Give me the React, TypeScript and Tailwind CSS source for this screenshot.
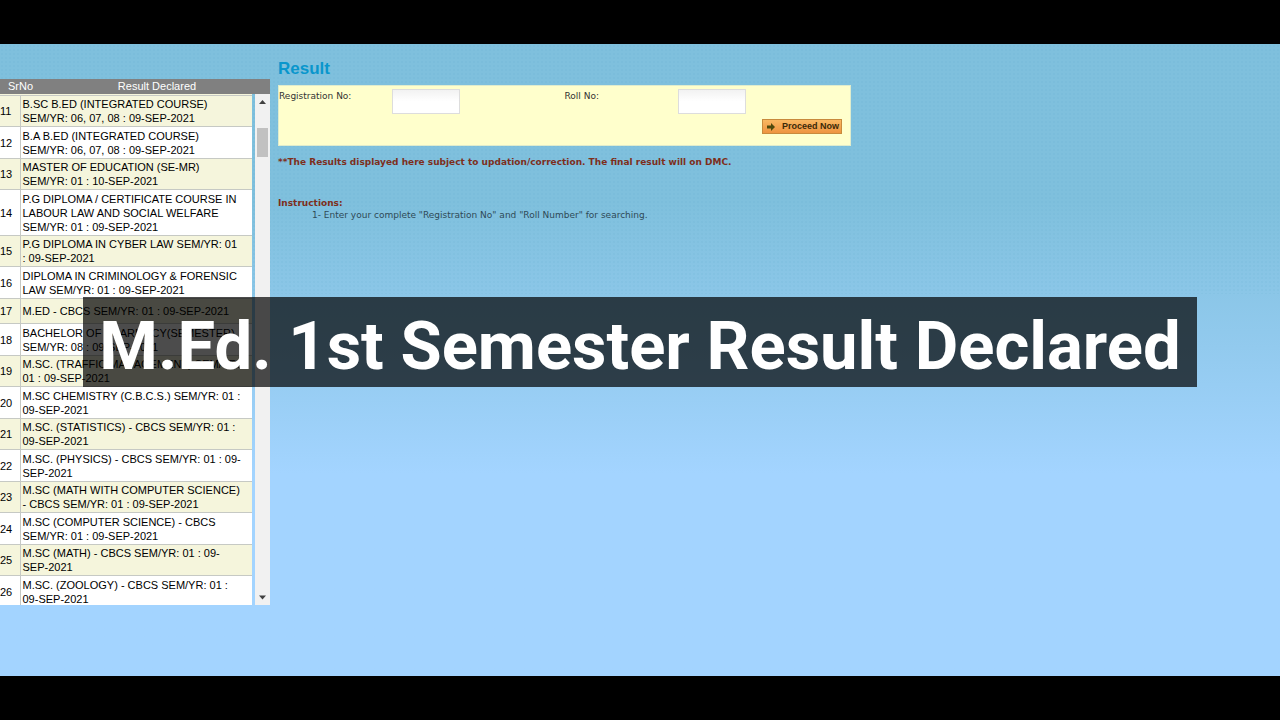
import React from 'react';

type ResultRow = {
  no: number;
  lines: string[];
};

const results: ResultRow[] = [
  { no: 11, lines: ['B.SC B.ED (INTEGRATED COURSE)', 'SEM/YR: 06, 07, 08 : 09-SEP-2021'] },
  { no: 12, lines: ['B.A B.ED (INTEGRATED COURSE)', 'SEM/YR: 06, 07, 08 : 09-SEP-2021'] },
  { no: 13, lines: ['MASTER OF EDUCATION (SE-MR)', 'SEM/YR: 01 : 10-SEP-2021'] },
  { no: 14, lines: ['P.G DIPLOMA / CERTIFICATE COURSE IN', 'LABOUR LAW AND SOCIAL WELFARE', 'SEM/YR: 01 : 09-SEP-2021'] },
  { no: 15, lines: ['P.G DIPLOMA IN CYBER LAW SEM/YR: 01', ': 09-SEP-2021'] },
  { no: 16, lines: ['DIPLOMA IN CRIMINOLOGY & FORENSIC', 'LAW SEM/YR: 01 : 09-SEP-2021'] },
  { no: 17, lines: ['M.ED - CBCS SEM/YR: 01 : 09-SEP-2021'] },
  { no: 18, lines: ['BACHELOR OF PHARMACY(SEMESTER)', 'SEM/YR: 08 : 09-SEP-2021'] },
  { no: 19, lines: ['M.SC. (TRAFFIC MANAGEMENT) SEM/YR:', '01 : 09-SEP-2021'] },
  { no: 20, lines: ['M.SC CHEMISTRY (C.B.C.S.) SEM/YR: 01 :', '09-SEP-2021'] },
  { no: 21, lines: ['M.SC. (STATISTICS) - CBCS SEM/YR: 01 :', '09-SEP-2021'] },
  { no: 22, lines: ['M.SC. (PHYSICS) - CBCS SEM/YR: 01 : 09-', 'SEP-2021'] },
  { no: 23, lines: ['M.SC (MATH WITH COMPUTER SCIENCE)', '- CBCS SEM/YR: 01 : 09-SEP-2021'] },
  { no: 24, lines: ['M.SC (COMPUTER SCIENCE) - CBCS', 'SEM/YR: 01 : 09-SEP-2021'] },
  { no: 25, lines: ['M.SC (MATH) - CBCS SEM/YR: 01 : 09-', 'SEP-2021'] },
  { no: 26, lines: ['M.SC. (ZOOLOGY) - CBCS SEM/YR: 01 :', '09-SEP-2021'] },
];

function rowHeight(lines: number) {
  if (lines === 1) return 'h-[25px]';
  if (lines === 3) return 'h-[46px]';
  return 'h-[31px] even:h-[32px]';
}

function ScrollBar() {
  return (
    <div className="flex w-[15px] flex-col items-center justify-between bg-[#f1f1f1]" aria-hidden="true">
      <div className="flex flex-col items-center">
        <svg className="h-[34px] w-[15px]" viewBox="0 0 15 34">
          <path d="M4 10 7.5 6 11 10z" fill="#404040" />
        </svg>
        <div className="h-[29px] w-[11px] bg-[#c1c1c1]" />
      </div>
      <svg className="h-[15px] w-[15px]" viewBox="0 0 15 15">
        <path d="M4 5.5 7.5 9.5 11 5.5z" fill="#404040" />
      </svg>
    </div>
  );
}

function ResultList() {
  return (
    <aside className="w-[270px] shrink-0 pt-[35px] text-[11px] leading-[14px]">
      <div className="flex h-[15px] bg-[#808080] text-white">
        <span className="w-[44px] pl-2">SrNo</span>
        <span className="flex-1 text-center">Result Declared</span>
      </div>
      <div className="flex h-[511px] justify-between overflow-hidden">
        <div className="w-[252px] border-t border-[#f5f5dc] bg-white">
          <table className="w-full table-fixed border-collapse border-t border-[#c6c9c4] text-black">
            <tbody>
              {results.map((row) => (
                <tr key={row.no} className={`border-b border-[#c6c9c4] odd:bg-[#f5f5dc] even:bg-white ${rowHeight(row.lines.length)}`}>
                  <td className="w-5 border-r border-[#c6c9c4] p-0 align-middle">{row.no}</td>
                  <td className="p-0 pl-[2px] align-middle">
                    {row.lines.map((line) => (
                      <div key={line} className="whitespace-nowrap">{line}</div>
                    ))}
                  </td>
                </tr>
              ))}
            </tbody>
          </table>
        </div>
        <ScrollBar />
      </div>
    </aside>
  );
}

function SearchForm() {
  return (
    <form className="flex h-[61px] w-[573px] flex-col border border-[#dfeccd] bg-[#ffffcc] text-[#333]" onSubmit={(e) => e.preventDefault()}>
      <div className="grid grid-cols-2 pt-[3px]">
        <div className="flex items-start">
          <label htmlFor="regNo" className="w-[113px] pt-px">Registration No:</label>
          <input id="regNo" type="text" className="h-[25px] w-[68px] border border-[#ddd] bg-linear-to-b from-[#f2f2f2] to-white to-50% px-1" />
        </div>
        <div className="flex items-start">
          <label htmlFor="rollNo" className="w-[113px] pt-px">Roll No:</label>
          <input id="rollNo" type="text" className="h-[25px] w-[68px] border border-[#ddd] bg-linear-to-b from-[#f2f2f2] to-white to-50% px-1" />
        </div>
      </div>
      <button
        type="submit"
        className="mt-[5px] mr-2 flex h-[15px] w-[80px] items-center justify-between self-end border border-[#c88a3c] bg-linear-to-b from-[#f9b862] to-[#ee9440] pr-[2px] pl-1 text-[9px] leading-[13px] font-bold text-[#3b2a08]"
      >
        <svg className="h-[8px] w-[8px]" viewBox="0 0 8 8">
          <path d="M0 2.5H4V0L8 4 4 8V5.5H0z" fill="#4d4a0c" />
        </svg>
        <span className="font-['Liberation_Sans',Arial,sans-serif] whitespace-nowrap">Proceed Now</span>
      </button>
    </form>
  );
}

export default function App() {
  return (
    <div className="min-h-screen bg-black py-11 font-['Liberation_Sans',Arial,sans-serif]">
      <div className="relative bg-linear-to-b from-[#7fc0dd] from-25% via-[#92caee] via-48% to-[#a3d4ff] to-68% pb-[71px]">
        {/* fine dot texture on the upper half */}
        <div className="pointer-events-none absolute inset-x-0 top-0 h-[250px] bg-[radial-gradient(#5fa9c9_0.5px,transparent_1px)] bg-[size:4px_4px] opacity-20" />

        <main className="relative flex gap-2">
          <ResultList />
          <section className="pt-4 font-['DejaVu_Sans',Verdana,sans-serif] text-[9px] leading-[12px] text-[#2f4a57]">
            <h1 className="mb-[7px] font-['Liberation_Sans',Arial,sans-serif] text-[17px] leading-[18px] font-bold text-[#0996cc]">Result</h1>
            <SearchForm />
            <p className="mt-[10px] font-bold text-[#7d2f1c]">
              **The Results displayed here subject to updation/correction. The final result will on DMC.
            </p>
            <h2 className="mt-[29px] font-bold text-[#7d2f1c]">Instructions:</h2>
            <p className="pl-[34px]">1- Enter your complete "Registration No" and "Roll Number" for searching.</p>
          </section>
        </main>

        {/* Headline banner */}
        <div className="absolute inset-x-0 top-[253px] flex justify-center">
          <p className="bg-black/70 px-4 pt-2 font-['Roboto',sans-serif] text-[67px] leading-[82px] font-bold whitespace-nowrap text-white">
            M.Ed. 1st Semester Result Declared
          </p>
        </div>
      </div>
    </div>
  );
}
